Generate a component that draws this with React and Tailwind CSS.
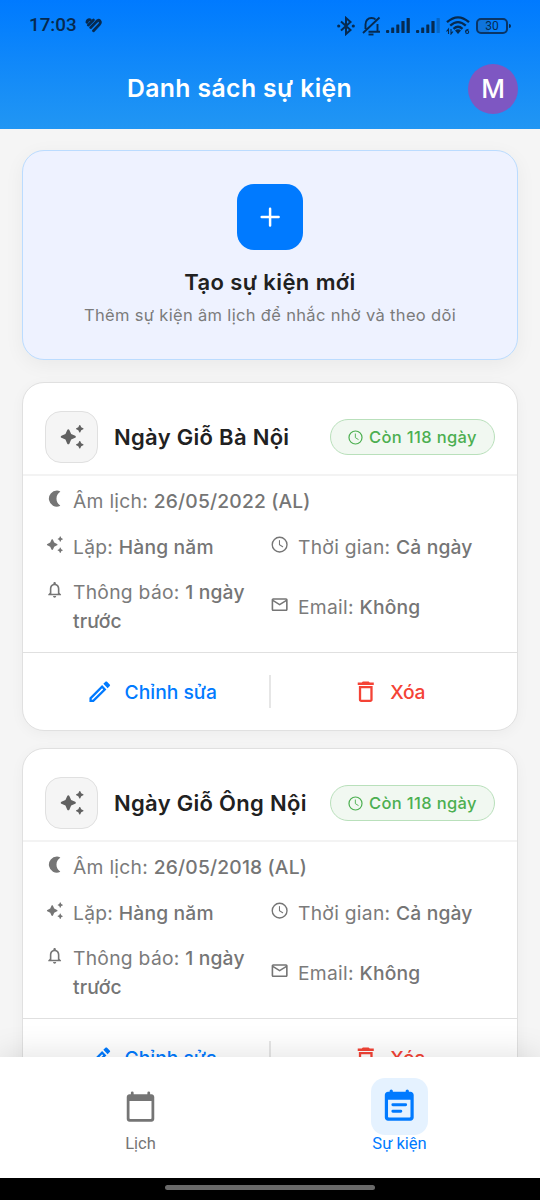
import { MdDeleteOutline, MdMailOutline, MdNotificationsNone, MdOutlineEdit } from "react-icons/md";

const events = [
     { id: 1, title: "Ngày Giỗ Bà Nội", date: "26/05/2022 (AL)", left: "Còn 118 ngày" },
     { id: 2, title: "Ngày Giỗ Ông Nội", date: "26/05/2018 (AL)", left: "Còn 118 ngày" },
];

function Sparkles({ className }) {
     return (
          <svg viewBox="0 0 24 24" fill="currentColor" className={className}>
               <path d="M19.46 8l.79-1.75L22 5.46a.5.5 0 0 0 0-.91l-1.75-.79L19.46 2a.5.5 0 0 0-.91 0l-.79 1.75-1.76.79a.5.5 0 0 0 0 .91l1.75.79.79 1.76c.18.39.74.39.92 0zM11.5 9.5L9.91 6c-.35-.78-1.47-.78-1.82 0L6.5 9.5 3 11.09c-.78.36-.78 1.47 0 1.82l3.5 1.59L8.09 18c.36.78 1.47.78 1.82 0l1.59-3.5 3.5-1.59c.78-.36.78-1.47 0-1.82L11.5 9.5zm7.04 6.5l-.79 1.75-1.75.79a.5.5 0 0 0 0 .91l1.75.79.79 1.76a.5.5 0 0 0 .91 0l.79-1.75 1.76-.79a.5.5 0 0 0 0-.91l-1.75-.79-.79-1.76c-.18-.39-.74-.39-.92 0z" />
          </svg>
     );
}

function Moon({ className }) {
     return (
          <svg viewBox="0 0 24 24" fill="currentColor" className={className}>
               <path d="M15 2c1.300 0 2.400.250 3.500.7.6.25.6.85.1 1.150C16 5.500 14.300 8.500 14.300 12s1.700 6.500 4.300 8.150c.5.3.5.9-.1 1.150A10 10 0 1 1 15 2z" />
          </svg>
     );
}

function Clock({ className }) {
     return (
          <svg viewBox="0 0 24 24" fill="none" stroke="currentColor" strokeWidth="1.700" className={className}>
               <circle cx="12" cy="12" r="9.200" />
               <path d="M11.800 7v5.200l4 2.500" strokeWidth="1.300" strokeLinecap="round" />
          </svg>
     );
}

function SignalBars({ faded }) {
     return (
          <svg viewBox="0 0 24 16" fill="currentColor" className="h-4 w-6">
               <rect x="0" y="12" width="3.200" height="3" rx="1" />
               <rect x="5.200" y="9.500" width="3" height="5.500" rx=".6" />
               <rect x="10.300" y="6.500" width="3" height="8.500" rx=".6" />
               <rect x="15.400" y="3" width="3.200" height="12" rx=".6" />
               <rect x="20.600" y="0" width="3.200" height="15" rx=".6" opacity={faded ? 0.3 : 1} />
          </svg>
     );
}

function StatusBar() {
     return (
          <div className="flex h-[50px] items-center pl-[29px] pr-[29px] pt-px text-[#062a50]">
               <span className="w-[56px] font-[Roboto] text-[18.800px] font-medium leading-none">17:03</span>
               <svg viewBox="0 0 17 15" fill="none" stroke="currentColor" strokeWidth="3" strokeLinecap="round" className="h-[15px] w-[17px]">
                    <path d="M2 4.200Q2.500 1.500 5.200 1.900" />
                    <path d="M3.200 7.200L8.500 2" strokeWidth="2.600" />
                    <path d="M5.700 9.600L11 4.200Q13.300 1.100 14.900 3Q16.100 4.600 14.300 6.600L8.500 12.700" strokeWidth="2.800" />
               </svg>

               <div className="ml-auto flex items-center">
                    <svg viewBox="0 0 18 20" fill="none" stroke="currentColor" strokeWidth="2" className="h-5 w-[18px]">
                         <path d="M4 5.500l9.500 8.500-4.500 4v-16l4.500 4L4 14.500" />
                         <circle cx="1.700" cy="10" r="1.600" fill="currentColor" stroke="none" />
                         <circle cx="16.300" cy="10" r="1.600" fill="currentColor" stroke="none" />
                    </svg>
                    <svg viewBox="0 0 19 20" fill="none" stroke="currentColor" strokeWidth="1.900" className="ml-[7px] h-5 w-[19px]">
                         <path d="M6.500 15.800h11.500M3.500 13V8.500C3.500 4.500 6 2 9.500 2c2 0 3.200.5 4 1.500M15.500 8v7.500M17.500 1.500L1 17" />
                         <path d="M6.500 18.500h5" />
                    </svg>
                    <div className="ml-[5px]"><SignalBars /></div>
                    <div className="ml-[6px]"><SignalBars faded /></div>
                    <svg viewBox="0 0 24 19" fill="none" stroke="currentColor" strokeWidth="2.300" className="ml-[6px] h-[19px] w-6">
                         <path d="M1 6.200Q12-3.500 23 6.200M4.200 9.600Q12 2.600 19.800 9.600M7.500 12.800Q12 8.600 16.500 12.800" />
                         <path d="M9 14.500Q12 12 15 14.500L12 18z" fill="currentColor" stroke="none" />
                         <path d="M2.500 18v-5l-2 2.500M5 13v5l2-2.500" strokeWidth="1.100" />
                         <path d="M22.500 13.200q-3 .5-3 2.800M21.200 14.500a1.500 1.500 0 1 1 0 3a1.500 1.500 0 0 1 0-3" strokeWidth="1.100" />
                    </svg>
                    <div className="ml-[6px] flex items-center">
                         <div className="flex h-4 w-8 items-center justify-center rounded-[5px] border-2 border-[#0a3566] bg-linear-to-r from-[#0f74dc] from-40% to-transparent to-40% font-[Roboto] text-[12px] leading-none">30</div>
                         <div className="ml-px h-1 w-[2px] rounded-r bg-current" />
                    </div>
               </div>
          </div>
     );
}

function Info({ icon, label, value }) {
     return (
          <div className="flex items-start gap-[8px] pr-4">
               <span className="mt-[2px] flex h-[20px] w-[20px] shrink-0 items-center justify-center">{icon}</span>
               <p className="text-[19.250px] leading-[29px] tracking-[0.280px] text-[#7b7b7b]">
                    {label}: <span className="font-medium tracking-[0.160px] text-[#757575]">{value}</span>
               </p>
          </div>
     );
}

function EventCard({ event }) {
     return (
          <div className="h-[349px] shrink-0 rounded-[22px] border border-[#e0e0e0] bg-white shadow-[0_3px_14px_rgba(0,0,0,0.04)]">
               <div className="flex h-[93px] items-end border-b-2 border-[#f3f3f3] px-[22px] pb-[11px]">
                    <div className="flex h-[52px] w-[53px] items-center justify-center rounded-[16px] border border-[#e0e0e0] bg-[#f5f5f5]">
                         <Sparkles className="h-[27.500px] w-[27.500px] text-[#616161]" />
                    </div>
                    <h2 className="ml-[16px] flex h-[52px] items-center text-[22px] font-semibold tracking-[0.300px] text-[#212121]">{event.title}</h2>
                    <div className="mb-[8px] ml-auto flex h-[36px] w-[165px] items-center justify-center gap-[5px] rounded-full border border-[#b9e0bb] bg-[#f1f8f1] pr-px text-[#4caf50]">
                         <Clock className="h-[17px] w-[17px]" />
                         <span className="text-[16.500px] font-medium tracking-[0.350px]">{event.left}</span>
                    </div>
               </div>

               <div className="grid h-[177px] grid-cols-2 content-start items-center gap-y-[16.500px] border-b border-[#e0e0e0] px-[22px] pt-[11px]">
                    <div className="col-span-2">
                         <Info icon={<Moon className="h-[19.250px] w-[19.250px] text-[#757575]" />} label="Âm lịch" value={event.date} />
                    </div>
                    <Info icon={<Sparkles className="h-[19.250px] w-[19.250px] text-[#757575]" />} label="Lặp" value="Hàng năm" />
                    <Info icon={<Clock className="h-[19.250px] w-[19.250px] text-[#757575]" />} label="Thời gian" value="Cả ngày" />
                    <Info icon={<MdNotificationsNone className="h-[19.250px] w-[19.250px] text-[#757575]" />} label="Thông báo" value="1 ngày trước" />
                    <Info icon={<MdMailOutline className="h-[19.250px] w-[19.250px] text-[#757575]" />} label="Email" value="Không" />
               </div>

               <div className="flex h-[77px] items-center justify-center text-[19.250px] font-medium">
                    <button className="flex w-[236px] items-center justify-center gap-[11px] pl-[1px] pt-px text-[#007aff]">
                         <MdOutlineEdit className="h-[27.500px] w-[27.500px]" />
                         Chỉnh sửa
                    </button>
                    <div className="h-[33px] w-[2px] bg-[#e6e6e6]" />
                    <button className="flex w-[236px] items-center justify-center gap-[11px] pr-[1px] pt-px tracking-[-0.200px] text-[#f44336]">
                         <MdDeleteOutline className="h-[27.500px] w-[27.500px]" />
                         Xóa
                    </button>
               </div>
          </div>
     );
}

export default function App() {
     return (
          <div className="flex h-[1200px] w-[540px] flex-col overflow-hidden bg-[#f5f5f5] font-[Inter,sans-serif]">
               <header className="h-[129px] shrink-0 bg-linear-to-b from-[#007aff] to-[#2196f3]">
                    <StatusBar />
                    <div className="grid h-[77px] grid-cols-[1fr_auto_1fr] items-center px-[22px]">
                         <span />
                         <h1 className="pr-[61px] text-[24.750px] font-semibold tracking-[0.400px] text-white">Danh sách sự kiện</h1>
                         <div className="flex h-[50px] w-[50px] items-center justify-center justify-self-end rounded-full bg-[#7e57c2] text-[26px] font-medium text-white">M</div>
                    </div>
               </header>

               <main className="flex min-h-0 flex-1 flex-col overflow-hidden px-[22px] pt-[21px]">
                    <div className="flex h-[210px] shrink-0 flex-col items-center rounded-[22px] border border-[#bbdcff] bg-[#eef2ff] pt-[33px] shadow-[0_5px_20px_rgba(0,0,0,0.05)]">
                         <div className="flex h-[66px] w-[66px] items-center justify-center rounded-[17px] bg-[#007aff]">
                              <svg viewBox="0 0 24 24" className="h-[33px] w-[33px]" fill="none" stroke="white" strokeWidth="1.800" strokeLinecap="round">
                                   <path d="M11.700 5.600v12.300M5.600 11.700h12.300" />
                              </svg>
                         </div>
                         <h2 className="mt-[16px] text-[22px] font-semibold leading-[33px] tracking-[0.400px] text-[#212121]">Tạo sự kiện mới</h2>
                         <p className="mt-[4px] text-[16.500px] leading-[24px] tracking-[0.330px] text-[#7b7b7b]">Thêm sự kiện âm lịch để nhắc nhở và theo dõi</p>
                    </div>

                    <div className="mt-[22px] flex flex-col gap-[17px]">
                         {events.map(e => (
                              <EventCard key={e.id} event={e} />
                         ))}
                    </div>
               </main>

               <nav className="z-10 flex h-[121px] shrink-0 justify-around bg-white px-[11px] pt-[21px] font-[Roboto,sans-serif] text-[16.500px] leading-[17px] shadow-[0_-5px_28px_rgba(0,0,0,0.1)]">
                    <div className="flex flex-col items-center text-[#757575]">
                         <div className="flex h-[57px] w-[57px] items-center justify-center">
                              <svg viewBox="0 0 24 24" className="h-[33px] w-[33px]" fill="currentColor">
                                   <path fillRule="evenodd" d="M6 1a1 1 0 0 1 1 1v1h10V2a1 1 0 0 1 2 0v1h1c1.100 0 2 .9 2 2v16c0 1.100-.9 2-2 2H4c-1.100 0-2-.9-2-2V5c0-1.100.9-2 2-2h1V2a1 1 0 0 1 1-1zM4 8v12.500c0 .3.200.5.5.5h15c.3 0 .5-.2.5-.5V8z" />
                              </svg>
                         </div>
                         <span>Lịch</span>
                    </div>
                    <div className="flex flex-col items-center text-[#007aff]">
                         <div className="flex h-[57px] w-[57px] items-center justify-center rounded-[14px] bg-[#e5f2ff]">
                              <svg viewBox="0 0 24 24" className="h-[38.500px] w-[38.500px]" fill="currentColor">
                                   <path fillRule="evenodd" d="M7 1.500c.55 0 1 .45 1 1V3h8v-.5c0-.55.450-1 1-1s1 .45 1 1V3h1c1.100 0 2 .9 2 2v14c0 1.100-.9 2-2 2H5c-1.100 0-2-.9-2-2V5c0-1.100.9-2 2-2h1v-.5c0-.55.450-1 1-1zM5 8v10.500c0 .3.200.5.5.5h13c.3 0 .5-.2.5-.5V8zM8 10.200h8a.9.9 0 0 1 0 1.800H8a.9.9 0 0 1 0-1.800zM8 14.200h5a.9.9 0 0 1 0 1.800H8a.9.9 0 0 1 0-1.800z" />
                              </svg>
                         </div>
                         <span>Sự kiện</span>
                    </div>
               </nav>

               <div className="flex h-[22px] shrink-0 justify-center bg-black pt-[7px]">
                    <div className="h-[5px] w-[210px] rounded-full bg-[#6b6b6b]" />
               </div>
          </div>
     );
}
